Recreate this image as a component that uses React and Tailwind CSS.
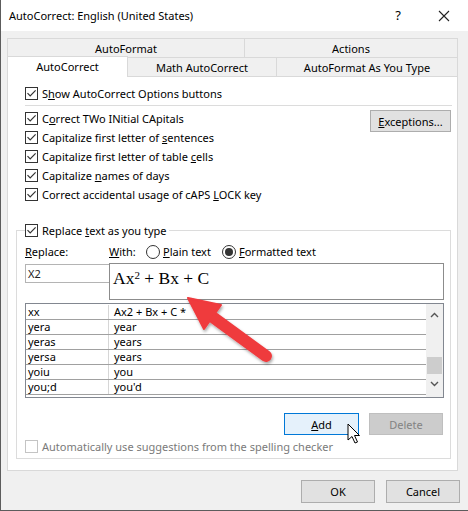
import React from "react";

function Check({ checked = true, disabled = false }) {
  return (
    <span
      className={
        disabled
          ? "w-[13px] h-[13px] border border-[#c4c4c4] bg-white flex items-center justify-center shrink-0"
          : "w-[13px] h-[13px] border border-[#333333] bg-white flex items-center justify-center shrink-0"
      }
    >
      {checked && (
        <svg width="11" height="11" viewBox="0 0 11 11">
          <path d="M1.5 5.2 L4.2 8 L9.6 2.4" stroke="#333" strokeWidth="1.2" fill="none" />
        </svg>
      )}
    </span>
  );
}

function Radio({ on }) {
  return (
    <span className="w-[14px] h-[14px] rounded-full border border-[#333333] bg-white flex items-center justify-center shrink-0">
      {on && <span className="w-[8px] h-[8px] rounded-full bg-[#333333]" />}
    </span>
  );
}

function CheckRow({ children, disabled }) {
  return (
    <div className="h-[19px] flex items-center gap-[4px]">
      <Check disabled={disabled} />
      <span className={disabled ? "text-[#8a8a8a]" : ""}>{children}</span>
    </div>
  );
}

const rows = [
  ["xx", "Ax2 + Bx + C *"],
  ["yera", "year"],
  ["yeras", "years"],
  ["yersa", "years"],
  ["yoiu", "you"],
  ["you;d", "you'd"],
];

export default function App() {
  return (
    <div className="relative w-[468px] h-[511px] bg-[#f0f0f0] border-l border-b border-[#5c5c5c] font-['Noto_Sans',sans-serif] text-[11px] text-black leading-none overflow-hidden">
      {/* Title bar */}
      <div className="h-[31px] bg-white flex items-center pl-[8px]">
        <span className="text-[11px]">AutoCorrect: English (United States)</span>
        <span className="ml-auto mr-[37px] text-[13px]">?</span>
        <svg width="12" height="12" viewBox="0 0 12 12" className="mr-[18px]">
          <path d="M1 1 L11 11 M11 1 L1 11" stroke="#222" strokeWidth="1.1" />
        </svg>
      </div>

      <div className="pl-[6px] pt-[7px]">
        {/* Tab row 1 */}
        <div className="flex h-[19px]">
          <div className="w-[237px] border-t border-l border-[#d9d9d9] flex items-center justify-center">AutoFormat</div>
          <div className="w-[214px] border-t border-l border-r border-[#d9d9d9] flex items-center justify-center">Actions</div>
        </div>
        {/* Tab row 2 */}
        <div className="flex items-end h-[19px]">
          <div className="relative top-[1px] z-10 w-[121px] h-[21px] bg-white border-t border-l border-r border-[#d9d9d9] flex items-center justify-center pb-[1px]">AutoCorrect</div>
          <div className="w-[148px] h-[19px] border-t border-[#d9d9d9] flex items-center justify-center">Math AutoCorrect</div>
          <div className="w-[182px] h-[19px] border-t border-l border-r border-[#d9d9d9] flex items-center justify-center">AutoFormat As You Type</div>
        </div>

        {/* Panel */}
        <div className="w-[451px] h-[395px] bg-white border border-[#d9d9d9]">
          <div className="pl-[17px] pt-[9px]">
            <div className="h-[15px] flex items-center gap-[4px]">
              <Check />
              <span>S<u>h</u>ow AutoCorrect Options buttons</span>
            </div>
            <div className="mt-[4px] h-px w-[427px] bg-[#dcdcdc]" />
            <div className="mt-[3px] flex pr-[6px]">
              <div className="flex flex-col">
                <CheckRow>C<u>o</u>rrect TWo INitial CApitals</CheckRow>
                <CheckRow>Capitalize first letter of <u>s</u>entences</CheckRow>
                <CheckRow>Capitalize first letter of table <u>c</u>ells</CheckRow>
                <CheckRow>Capitalize <u>n</u>ames of days</CheckRow>
                <CheckRow>Correct accidental usage of cAPS <u>L</u>OCK key</CheckRow>
              </div>
              <div className="ml-auto mt-[1px] w-[81px] h-[22px] bg-[#e1e1e1] border border-[#adadad] flex items-center justify-center">
                <span><u>E</u>xceptions...</span>
              </div>
            </div>
          </div>

          {/* Group box */}
          <div className="ml-[8px] mt-[26px] w-[435px] h-[229px] border border-[#dcdcdc] pl-[8px]">
            <div className="-mt-[8px] h-[15px] flex">
              <div className="flex items-center gap-[4px] bg-white pr-[2px]">
                <Check />
                <span>Replace <u>t</u>ext as you type</span>
              </div>
            </div>
            <div className="mt-[6px] h-[15px] flex items-center">
              <span className="w-[84px]"><u>R</u>eplace:</span>
              <span className="w-[37px]"><u>W</u>ith:</span>
              <Radio on={false} />
              <span className="ml-[3px] w-[59px]"><u>P</u>lain text</span>
              <Radio on={true} />
              <span className="ml-[3px]"><u>F</u>ormatted text</span>
            </div>
            <div className="mt-[4px] flex items-start">
              <div className="mt-[1px] w-[85px] h-[19px] border border-[#b4b4b4] flex items-center pl-[2px] text-[#222]">X2</div>
              <div className="-ml-px w-[335px] h-[37px] border border-[#8c8c8c] pl-[3px] pt-[5px] font-['Liberation_Serif',serif] text-[17.5px] leading-[18px]">
                Ax<sup className="text-[11px]">2</sup> + Bx + C
              </div>
            </div>
            {/* List */}
            <div className="mt-[3px] w-[419px] h-[95px] border border-[#828790] flex pt-px">
              <div className="w-[400px] flex flex-col">
                {rows.map(([a, b], i) => (
                  <div key={i} className="h-[15px] flex border-b border-[#a0a0a0] shrink-0 leading-[14px]">
                    <div className="w-[83px] border-r border-[#d6d6d6] pl-[2px] flex items-center">{a}</div>
                    <div className="pl-[5px] flex items-center">{b}</div>
                  </div>
                ))}
              </div>
              <div className="w-[17px] -mt-px h-[93px] bg-[#f0f0f0] flex flex-col items-center">
                <svg width="9" height="6" viewBox="0 0 9 6" className="mt-[8px]">
                  <path d="M1 5 L4.5 1.5 L8 5" stroke="#555" strokeWidth="1.4" fill="none" />
                </svg>
                <div className="mt-[39px] w-[15px] h-[17px] bg-[#cdcdcd]" />
                <svg width="9" height="6" viewBox="0 0 9 6" className="mt-[7px]">
                  <path d="M1 1 L4.5 4.5 L8 1" stroke="#555" strokeWidth="1.4" fill="none" />
                </svg>
              </div>
            </div>
            {/* Add / Delete */}
            <div className="mt-[15px] flex justify-end pr-[7px] gap-[10px]">
              <div className="w-[75px] h-[22px] bg-[#e5f1fb] border border-[#0078d7] flex items-center justify-center">
                <span><u>A</u>dd</span>
              </div>
              <div className="w-[74px] h-[22px] bg-[#cccccc] border border-[#bfbfbf] flex items-center justify-center text-[#838383]">
                Delete
              </div>
            </div>
            <div className="mt-[4px] h-[15px] flex items-center gap-[4px]">
              <Check checked={false} disabled />
              <span className="text-[#7a7a7a]">Automatically use suggestions from the spelling checker</span>
            </div>
          </div>
        </div>

        {/* OK / Cancel */}
        <div className="mt-[9px] flex justify-end pr-[8px] gap-[11px]">
          <div className="w-[74px] h-[23px] bg-[#e1e1e1] border border-[#adadad] flex items-center justify-center">OK</div>
          <div className="w-[74px] h-[23px] bg-[#e1e1e1] border border-[#adadad] flex items-center justify-center">Cancel</div>
        </div>
      </div>

      {/* Red annotation arrow */}
      <svg className="absolute left-0 top-0 pointer-events-none" width="468" height="511" viewBox="0 0 468 511">
        <defs>
          <filter id="sh" x="-20%" y="-20%" width="140%" height="140%">
            <feDropShadow dx="1" dy="2" stdDeviation="1.5" floodColor="#000" floodOpacity="0.35" />
          </filter>
        </defs>
        <g filter="url(#sh)">
          <line x1="213" y1="318" x2="265" y2="356" stroke="#ef3a3e" strokeWidth="12" strokeLinecap="round" />
          <polygon points="187,298 220,305 203,329" fill="#ef3a3e" stroke="#ef3a3e" strokeWidth="2" strokeLinejoin="round" />
        </g>
        {/* mouse cursor */}
        <path
          d="M347 424 L347 440 L351 436.5 L354 443 L356.5 442 L353.5 435.5 L358.5 435.5 Z"
          fill="#fff"
          stroke="#000"
          strokeWidth="1"
          strokeLinejoin="round"
        />
      </svg>
    </div>
  );
}
